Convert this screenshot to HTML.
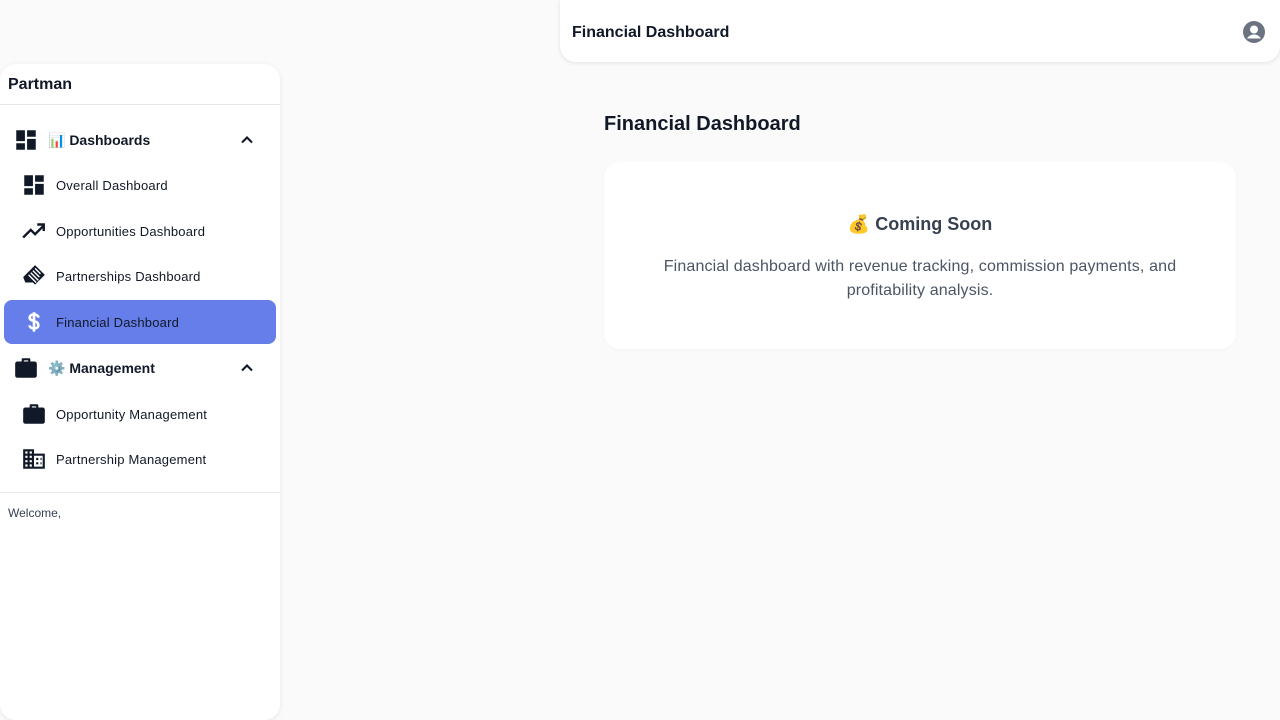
<!DOCTYPE html>
<html><head><meta charset="utf-8"><style>
*{box-sizing:border-box;margin:0;padding:0}
html,body{width:1280px;height:720px;overflow:hidden}
body{background:#fafafa;font-family:"Liberation Sans",sans-serif;color:#111827;position:relative}
.side{position:absolute;left:0;top:64px;width:280px;height:656px;background:#fff;border-radius:16px;box-shadow:0 1px 6px rgba(0,0,0,.08)}
.brand{height:41px;border-bottom:1px solid #e5e7eb;padding:12px 8px;font-size:16px;font-weight:bold}
.row{position:absolute;left:0;width:280px;display:flex;align-items:center}
.sec{font-size:14px;font-weight:bold}
.item{font-size:13px;letter-spacing:.2px}
.row svg{flex:none}
.chev{position:absolute;left:237px}
.active{position:absolute;left:4px;top:236px;width:272px;height:44px;background:#667eea;border-radius:8px}
.top{position:absolute;left:560px;top:0;width:720px;height:62px;background:#fff;border-radius:0 0 16px 16px;box-shadow:0 1px 4px rgba(0,0,0,.1)}
.top h1{position:absolute;left:12px;top:24px;font-size:16px;font-weight:bold}
h2{position:absolute;left:604px;top:113px;font-size:20px;font-weight:bold}
.card{position:absolute;left:604px;top:162px;width:632px;height:187px;background:#fff;border-radius:16px;box-shadow:0 1px 3px rgba(0,0,0,.03);text-align:center}
.card h3{margin-top:52px;font-size:18px;font-weight:bold;color:#374151}
.card p{margin:20px auto 0;width:560px;font-size:16px;line-height:24px;color:#4b5563;letter-spacing:.15px}
</style></head><body>
<div class="side">
<div class="brand">Partman</div>
<div class="active"></div>
<div class="row sec" style="top:64px;height:24px"><svg style="margin-left:13px" width="26" height="26" viewBox="0 0 24 24"><path fill="#111827" d="M3 13h8V3H3v10zm0 8h8v-6H3v6zm10 0h8V11h-8v10zm0-18v6h8V3h-8z"/></svg><span style="margin-left:9px">📊 Dashboards</span><svg class="chev" width="20" height="20" viewBox="0 0 24 24"><path d="M6 15l6-6 6 6" stroke="#111827" stroke-width="2.5" fill="none"/></svg></div>
<div class="row item" style="top:109px;height:24px"><svg style="margin-left:21px" width="26" height="26" viewBox="0 0 24 24"><path fill="#111827" d="M3 13h8V3H3v10zm0 8h8v-6H3v6zm10 0h8V11h-8v10zm0-18v6h8V3h-8z"/></svg><span style="margin-left:9px">Overall Dashboard</span></div>
<div class="row item" style="top:155px;height:24px"><svg style="margin-left:21px" width="26" height="26" viewBox="0 0 24 24"><path fill="none" stroke="#111827" stroke-width="2.2" d="M2 18l7-7 4 4 8-8M15 6h6v6"/></svg><span style="margin-left:9px">Opportunities Dashboard</span></div>
<div class="row item" style="top:200px;height:24px"><svg style="margin-left:21px" width="26" height="26" viewBox="0 0 24 24"><path fill="#111827" d="M13 2l9 9-9 9-2-2-7 0-2-5 6-6z"/><path stroke="#fff" stroke-width="1.3" d="M7 11l7 7M9 9l7 7M11 7l6 6M13 5l5 5"/></svg><span style="margin-left:9px">Partnerships Dashboard</span></div>
<div class="row item" style="top:246px;height:24px"><svg style="margin-left:21px" width="26" height="26" viewBox="0 0 24 24"><path fill="none" stroke="#fff" stroke-width="2.4" d="M12 3v18M16 8c0-2-2-3-4-3s-4 1-4 3c0 4 8 2 8 7 0 2-2 3-4 3s-4-1-4-3"/></svg><span style="margin-left:9px">Financial Dashboard</span></div>
<div class="row sec" style="top:292px;height:24px"><svg style="margin-left:13px" width="26" height="26" viewBox="0 0 24 24"><path fill="#111827" d="M9 3h6a1 1 0 011 1v2h4a2 2 0 012 2v11a2 2 0 01-2 2H4a2 2 0 01-2-2V8a2 2 0 012-2h4V4a1 1 0 011-1zm1 2v1h4V5z"/></svg><span style="margin-left:9px">⚙️ Management</span><svg class="chev" width="20" height="20" viewBox="0 0 24 24"><path d="M6 15l6-6 6 6" stroke="#111827" stroke-width="2.5" fill="none"/></svg></div>
<div class="row item" style="top:338px;height:24px"><svg style="margin-left:21px" width="26" height="26" viewBox="0 0 24 24"><path fill="#111827" d="M9 3h6a1 1 0 011 1v2h4a2 2 0 012 2v11a2 2 0 01-2 2H4a2 2 0 01-2-2V8a2 2 0 012-2h4V4a1 1 0 011-1zm1 2v1h4V5z"/></svg><span style="margin-left:9px">Opportunity Management</span></div>
<div class="row item" style="top:383px;height:24px"><svg style="margin-left:21px" width="26" height="26" viewBox="0 0 24 24"><path fill="#111827" d="M2 21V3h10v4h10v14zm2-2h2v-2H4zm0-4h2v-2H4zm0-4h2V9H4zm0-4h2V5H4zm4 12h2v-2H8zm0-4h2v-2H8zm0-4h2V9H8zm0-4h2V5H8zm4 12h8V9h-8zm2-8h2v2h-2zm0 4h2v2h-2zm4-4h1v2h-1zm0 4h1v2h-1z"/></svg><span style="margin-left:9px">Partnership Management</span></div>
<div style="position:absolute;top:428px;left:0;width:280px;border-top:1px solid #e5e7eb;padding:13px 8px;font-size:12px;color:#374151">Welcome,</div>
</div>
<div class="top"><h1>Financial Dashboard</h1><svg style="position:absolute;left:682px;top:20px" width="24" height="24" viewBox="0 0 24 24"><circle cx="12" cy="12" r="11" fill="#6b7280"/><circle cx="12" cy="9.5" r="4" fill="#fff"/><path d="M5 18.5c2-3 4.5-4 7-4s5 1 7 4" fill="#fff"/></svg></div>
<h2>Financial Dashboard</h2>
<div class="card"><h3>💰 Coming Soon</h3><p>Financial dashboard with revenue tracking, commission payments, and profitability analysis.</p></div>
</body></html>
